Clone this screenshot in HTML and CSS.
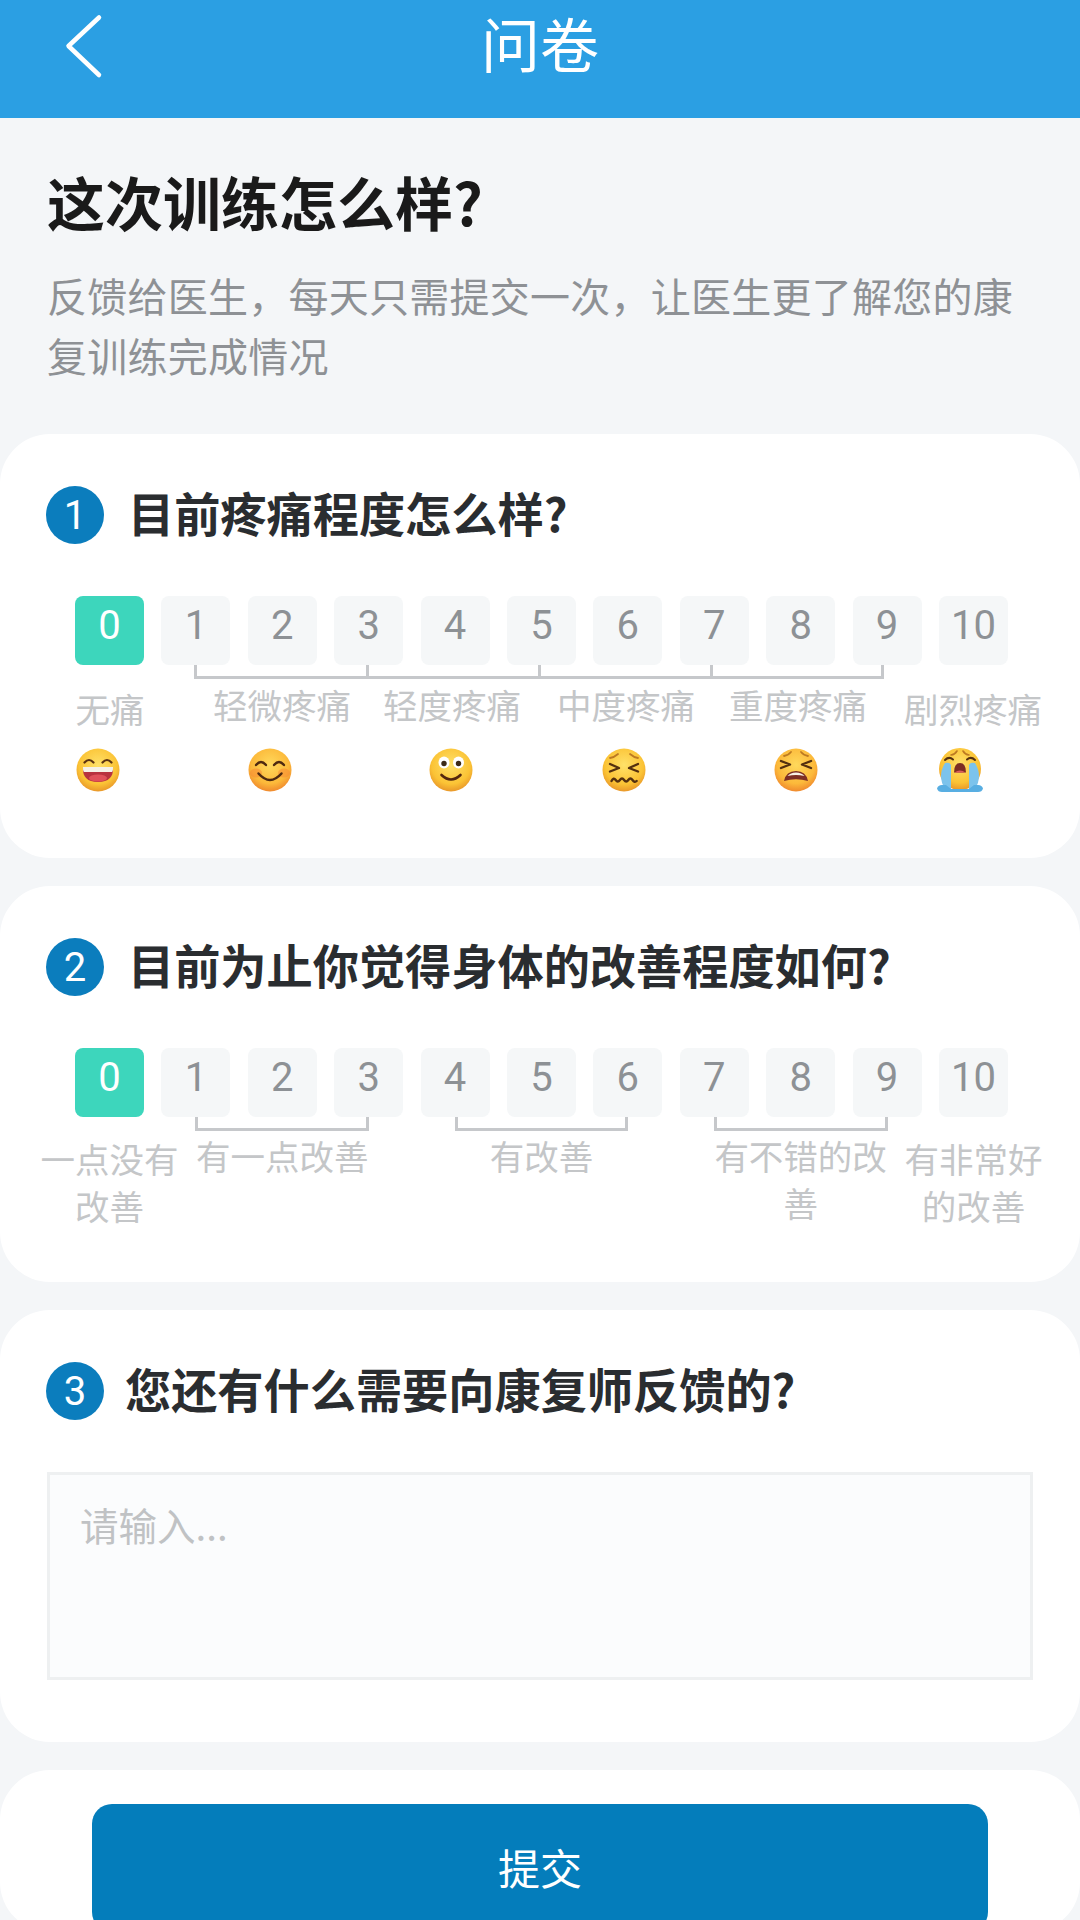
FILE: index.html
```html
<!DOCTYPE html>
<html lang="zh-CN">
<head>
  <meta charset="UTF-8" />
  <meta name="viewport" content="width=device-width, initial-scale=1.0" />
  <title>问卷</title>
  <link rel="stylesheet" href="styles.css">
</head>
<body>
  <div class="page">
    <header class="topbar">
      <button class="back-btn" aria-label="返回">
        <svg width="40" height="66" viewBox="0 0 40 66"><polyline points="35,4.500 4.500,33 35,62" fill="none" stroke="#fff" stroke-width="4.500" stroke-linecap="round" stroke-linejoin="round"/></svg>
      </button>
      <div class="topbar-title">问卷</div>
    </header>

    <div class="intro">
      <h1>这次训练怎么样?</h1>
      <p>反馈给医生，每天只需提交一次，让医生更了解您的康复训练完成情况</p>
    </div>

    <section class="card card-pain">
      <div class="question"><span class="badge">1</span><h2>目前疼痛程度怎么样?</h2></div>
      <div class="scale">
        <div class="num active">0</div><div class="num">1</div><div class="num">2</div><div class="num">3</div><div class="num">4</div><div class="num">5</div><div class="num">6</div><div class="num">7</div><div class="num">8</div><div class="num">9</div><div class="num">10</div>
      </div>
      <div class="ticks">
        <span></span><span></span><span></span><span></span>
      </div>
      <div class="pain-labels">
        <div class="end">无痛</div>
        <div>轻微疼痛</div>
        <div class="nudge">轻度疼痛</div>
        <div>中度疼痛</div>
        <div>重度疼痛</div>
        <div class="end last">剧烈疼痛</div>
      </div>
      <div class="faces">
        <svg viewBox="0 0 44 44">
          <defs>
            <radialGradient id="skin" cx="50%" cy="38%" r="62%">
              <stop offset="0" stop-color="#ffe169"/><stop offset="0.72" stop-color="#fbc335"/><stop offset="1" stop-color="#e9982a"/>
            </radialGradient>
            <radialGradient id="blush" cx="50%" cy="38%" r="62%">
              <stop offset="0" stop-color="#ffd95c"/><stop offset="0.7" stop-color="#fcb93a"/><stop offset="1" stop-color="#f08a2e"/>
            </radialGradient>
          </defs>
          <circle cx="22" cy="22" r="21.5" fill="url(#skin)"/>
          <path d="M8.500 14.500q4.500-5 9 0M26.500 14.500q4.500-5 9 0" fill="none" stroke="#5b3212" stroke-width="2.200" stroke-linecap="round"/>
          <path d="M7 19h30q1 15-15 15T7 19z" fill="#b8323f"/>
          <path d="M7 19h30q.3 3-.8 5H7.800q-1.100-2-.8-5z" fill="#f6f1e8"/>
          <ellipse cx="22" cy="30" rx="9" ry="3.600" fill="#e0505a"/>
        </svg>
        <svg viewBox="0 0 44 44">
          <circle cx="22" cy="22" r="21.5" fill="url(#blush)"/>
          <ellipse cx="8" cy="25" rx="6" ry="4.500" fill="#f78a35" opacity=".55"/>
          <ellipse cx="36" cy="25" rx="6" ry="4.500" fill="#f78a35" opacity=".55"/>
          <path d="M8 17q5-6 10 0M26 17q5-6 10 0" fill="none" stroke="#4f2a10" stroke-width="2.300" stroke-linecap="round"/>
          <path d="M10.500 25.500q11.500 13 23 0" fill="none" stroke="#4f2a10" stroke-width="2.500" stroke-linecap="round"/>
        </svg>
        <svg viewBox="0 0 44 44">
          <circle cx="22" cy="22" r="21.5" fill="url(#skin)"/>
          <ellipse cx="15" cy="14.500" rx="5.500" ry="6" fill="#fff"/>
          <ellipse cx="29.500" cy="14.500" rx="5.500" ry="6" fill="#fff"/>
          <circle cx="15" cy="15.500" r="2.700" fill="#3c2a18"/>
          <circle cx="29.500" cy="15.500" r="2.700" fill="#3c2a18"/>
          <path d="M12.500 27q9.500 9 19 0" fill="none" stroke="#54270e" stroke-width="2.600" stroke-linecap="round"/>
        </svg>
        <svg viewBox="0 0 44 44">
          <circle cx="22" cy="22" r="21.5" fill="url(#skin)"/>
          <path d="M8 10q4-.5 8-4M36 10q-4-.5-8-4" fill="none" stroke="#bd7a22" stroke-width="1.800" stroke-linecap="round"/>
          <path d="M8 16l9 4-9 3.500M36 16l-9 4 9 3.500" fill="none" stroke="#54300f" stroke-width="2.400" stroke-linecap="round" stroke-linejoin="round"/>
          <path d="M9.500 33q2.100-4 4.200-1t4.200 0 4.200 0 4.200 0 4.200 0 4.200 1" fill="none" stroke="#54300f" stroke-width="2.400" stroke-linecap="round" stroke-linejoin="round"/>
        </svg>
        <svg viewBox="0 0 44 44">
          <circle cx="22" cy="22" r="21.5" fill="url(#blush)"/>
          <path d="M10 8q4-.5 7-4M34 8q-4-.5-7-4" fill="none" stroke="#bd7a22" stroke-width="1.800" stroke-linecap="round"/>
          <path d="M7 13l9 3.500-9 3.500M37 13l-9 3.500 9 3.500" fill="none" stroke="#54300f" stroke-width="2.400" stroke-linecap="round" stroke-linejoin="round"/>
          <path d="M10 33q2-10 12-10t12 10q-12-3.500-24 0z" fill="#7d2e24"/>
          <path d="M13.500 28q3-3.500 8.500-3.500T30.500 28q-8.500-2-17 0z" fill="#f7f1e6"/>
        </svg>
        <svg viewBox="0 0 46 46" class="crying">
          <circle cx="23" cy="22" r="21" fill="url(#skin)"/>
          <path d="M14 8q4-.5 6-4M32 8q-4-.5-6-4" fill="none" stroke="#bd7a22" stroke-width="1.600" stroke-linecap="round"/>
          <path d="M8 13q4-4 8-.5M38 13q-4-4-8-.5" fill="none" stroke="#54300f" stroke-width="2" stroke-linecap="round"/>
          <path d="M8 16q5-1 6 2v24H8q-8-13 0-26zM38 16q-5-1-6 2v24h6q8-13 0-26z" fill="#7cc3ec"/>
          <path d="M0 41.500q1-3.500 5-3.500h4l5 4h18l5-4h4q4 0 5 3.500-1 3.500-5 3.500H5q-4 0-5-3.500z" fill="#58aee2"/>
          <path d="M17 25.500q0-9.500 6-9.500t6 9.500z" fill="#7d2e24"/>
          <path d="M17.500 25.500q5.500-4 11 0z" fill="#dc5b5e"/>
        </svg>
      </div>
    </section>

    <section class="card">
      <div class="question"><span class="badge">2</span><h2>目前为止你觉得身体的改善程度如何?</h2></div>
      <div class="scale">
        <div class="num active">0</div><div class="num">1</div><div class="num">2</div><div class="num">3</div><div class="num">4</div><div class="num">5</div><div class="num">6</div><div class="num">7</div><div class="num">8</div><div class="num">9</div><div class="num">10</div>
      </div>
      <div class="scale groups">
        <div class="bracket span-a"></div>
        <div class="bracket span-b"></div>
        <div class="bracket span-c"></div>
      </div>
      <div class="scale better-labels">
        <div class="end first">一点没有改善</div>
        <div class="span-a">有一点改善</div>
        <div class="span-b">有改善</div>
        <div class="span-c">有不错的改善</div>
        <div class="end last">有非常好的改善</div>
      </div>
    </section>

    <section class="card card-note">
      <div class="question"><span class="badge">3</span><h2>您还有什么需要向康复师反馈的?</h2></div>
      <textarea class="note" placeholder="请输入..."></textarea>
    </section>

    <section class="card card-submit">
      <button class="submit">提交</button>
    </section>
  </div>
</body>
</html>
```

FILE: styles.css
```css
* { box-sizing: border-box; }
body {
  margin: 0;
  background: #f4f6f8;
  font-family: "Noto Sans CJK SC", "Noto Sans", sans-serif;
}

.page {
  height: 1920px;
  overflow: hidden;
  display: flex;
  flex-direction: column;
}

.topbar {
  position: relative;
  flex: none;
  height: 118px;
  background: #2b9fe3;
  display: flex;
  justify-content: center;
}

.back-btn {
  position: absolute;
  top: 13px;
  left: 64px;
  padding: 0;
  background: none;
  border: none;
  display: flex;
}

.topbar-title {
  color: #fff;
  font-size: 59px;
  line-height: 85px;
}

.intro {
  flex: none;
  height: 316px;
  padding: 43px 47px 0;
}

.intro h1 {
  margin: 0;
  font-size: 58px;
  line-height: 80px;
  font-weight: 700;
  color: #1a1a1a;
}

.intro p {
  margin: 24px 0 0;
  font-size: 40px;
  line-height: 60px;
  letter-spacing: 0.25px;
  color: #8e9195;
}

.card {
  flex: none;
  background: #fff;
  border-radius: 50px;
  padding: 52px 0 0;
  margin-bottom: 28px;
}

.question {
  display: flex;
  align-items: center;
  gap: 24px;
  padding-left: 46px;
}

.badge {
  flex: none;
  width: 58px;
  height: 58px;
  border-radius: 50%;
  background: #0b7dbd;
  color: #fff;
  font-family: Roboto, sans-serif;
  font-size: 40px;
  display: flex;
  justify-content: center;
  align-items: center;
}

.question h2 {
  margin: 0;
  padding-bottom: 7px;
  font-size: 46.2px;
  line-height: 51px;
  font-weight: 700;
  color: #2a2d30;
}

.scale {
  display: grid;
  grid-template-columns: repeat(11, 69px);
  column-gap: 17.4px;
  padding-left: 75px;
  margin-top: 52px;
}

.num {
  height: 69px;
  padding-bottom: 10px;
  border-radius: 8px;
  background: #f5f7f8;
  color: #8d9195;
  font-family: Roboto, sans-serif;
  font-size: 40px;
  display: flex;
  justify-content: center;
  align-items: center;
}

.num.active {
  background: #3dd6bc;
  color: #fff;
}

/* pain scale: one continuous line with a tick every two numbers */
.ticks {
  display: flex;
  padding-left: 194px;
}

.ticks span {
  width: 172px;
  height: 14px;
  border-left: 3px solid #c6c8cb;
  border-bottom: 3px solid #c6c8cb;
}

.ticks span:last-child {
  width: 174px;
  border-right: 3px solid #c6c8cb;
}

.pain-labels {
  display: flex;
  padding: 2px 0 0 24px;
  font-size: 34.5px;
  line-height: 47px;
  color: #c4c6c8;
  text-align: center;
}

.pain-labels div {
  width: 172px;
}

.pain-labels .end {
  margin-top: 4px;
}

.pain-labels .nudge {
  padding-right: 4px;
}

.pain-labels .last {
  padding-left: 6px;
}

.faces {
  display: grid;
  grid-template-columns: 172px 181px 173px 172px 163px 46px;
  padding: 0 0 65px 76px;
  margin-top: 16px;
}

.faces svg {
  display: block;
  width: 44px;
  height: 44px;
}

.faces .crying {
  width: 46px;
  height: 46px;
  margin-top: -1px;
}

/* improvement scale: separate brackets under a group of three numbers */
.groups {
  margin-top: 0;
}

.bracket {
  height: 14px;
  margin: 0 34px;
  border: 3px solid #c6c8cb;
  border-top: none;
}

.span-a { grid-column: 2 / 5; }
.span-b { grid-column: 5 / 8; }
.span-c { grid-column: 8 / 11; }

.better-labels {
  margin-top: 1px;
  padding-bottom: 53px;
  font-size: 34.5px;
  line-height: 47px;
  color: #c4c6c8;
  text-align: center;
}

.better-labels div {
  width: 174px;
  justify-self: center;
}

.better-labels .end {
  width: 140px;
  margin-top: 3px;
}

.better-labels .first { grid-column: 1; }
.better-labels .last { grid-column: 11; }

.card-note {
  padding: 52px 47px 62px;
}

.card-note .question {
  gap: 21px;
  padding-left: 0;
  margin-left: -1px;
}

.note {
  display: block;
  width: 100%;
  height: 208px;
  margin-top: 52px;
  padding: 21px 30px;
  background: #fbfcfd;
  border: 3px solid #eef0f1;
  border-radius: 0;
  font-family: inherit;
  font-size: 38.5px;
  line-height: 56px;
  resize: none;
  outline: none;
}

.note::placeholder {
  color: #c0c2c4;
  opacity: 1;
}

.card-submit {
  padding: 34px 92px 0;
  margin-bottom: 0;
  flex: 1;
}

.submit {
  display: block;
  width: 100%;
  height: 128px;
  padding: 0 0 4px;
  border: none;
  border-radius: 20px;
  background: #047dbb;
  color: #fff;
  font-family: inherit;
  font-size: 42px;
}
```
